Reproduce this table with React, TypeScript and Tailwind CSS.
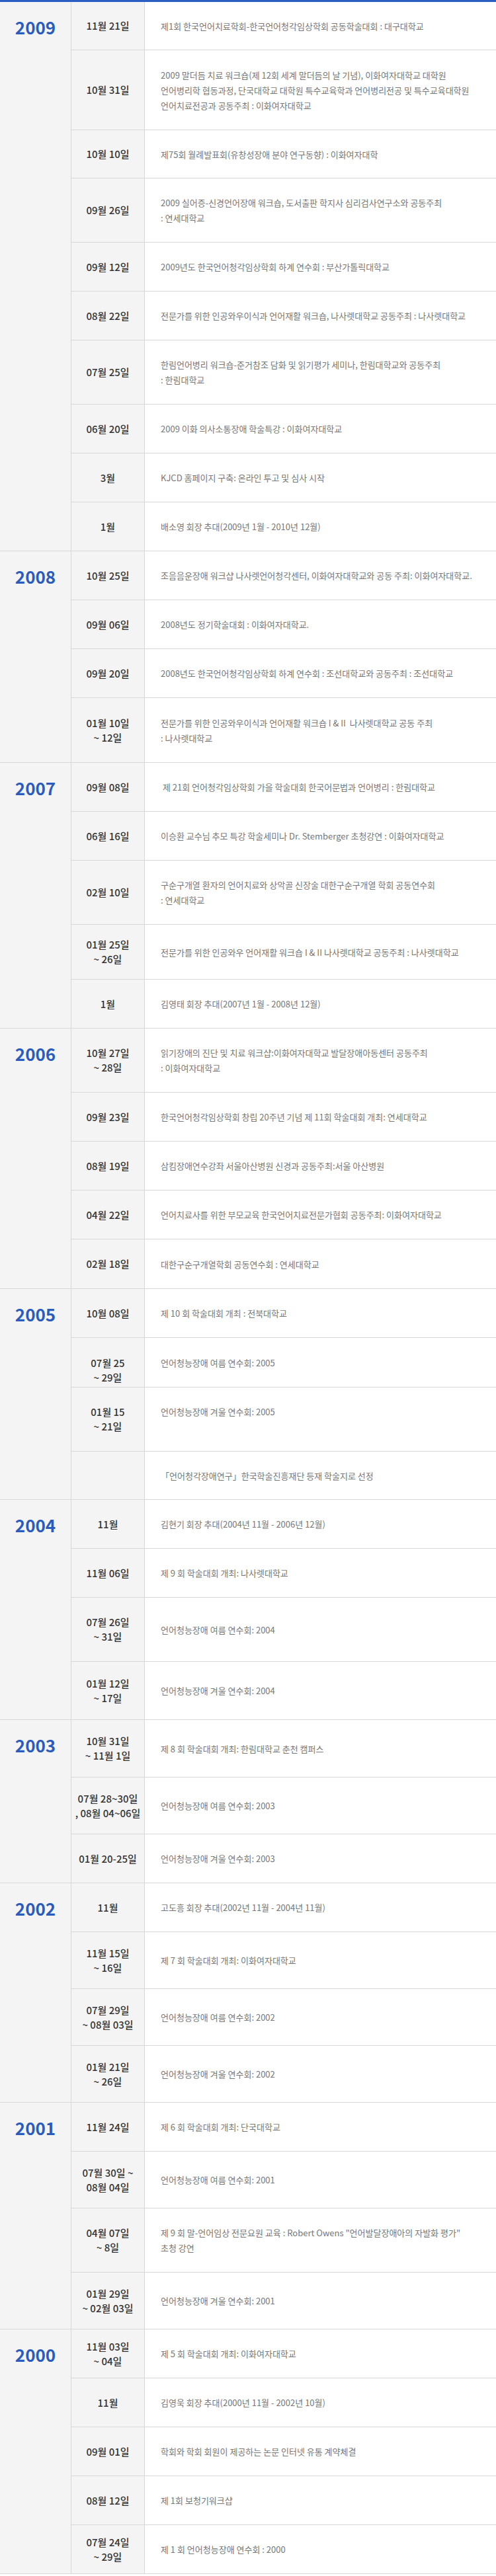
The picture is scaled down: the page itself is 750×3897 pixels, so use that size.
import React from "react";
import clsx from "clsx";

type Row = {
  date: string[];
  text: string[];
  h: string;
  dateCls?: string;
};

type Year = {
  year: string;
  rows: Row[];
};

const history: Year[] = [
  {
    year: "2009",
    rows: [
      { date: ["11월 21일"], text: ["제1회 한국언어치료학회-한국언어청각임상학회 공동학술대회 : 대구대학교"], h: "h-[73px]" },
      {
        date: ["10월 31일"],
        text: [
          "2009 말더듬 치료 워크숍(제 12회 세계 말더듬의 날 기념), 이화여자대학교 대학원",
          "언어병리학 협동과정, 단국대학교 대학원 특수교육학과 언어병리전공 및 특수교육대학원",
          "언어치료전공과 공동주최 : 이화여자대학교",
        ],
        h: "h-[121px]",
      },
      { date: ["10월 10일"], text: ["제75회 월례발표회(유창성장애 분야 연구동향) : 이화여자대학"], h: "h-[73px]" },
      {
        date: ["09월 26일"],
        text: ["2009 실어증-신경언어장애 워크숍, 도서출판 학지사 심리검사연구소와 공동주최", ": 연세대학교"],
        h: "h-[97px]",
      },
      { date: ["09월 12일"], text: ["2009년도 한국언어청각임상학회 하계 연수회 : 부산가톨릭대학교"], h: "h-[74px]" },
      { date: ["08월 22일"], text: ["전문가를 위한 인공와우이식과 언어재활 워크숍, 나사렛대학교 공동주최 : 나사렛대학교"], h: "h-[74px]" },
      {
        date: ["07월 25일"],
        text: ["한림언어병리 워크숍-준거참조 담화 및 읽기평가 세미나, 한림대학교와 공동주최", ": 한림대학교"],
        h: "h-[97px]",
      },
      { date: ["06월 20일"], text: ["2009 이화 의사소통장애 학술특강 : 이화여자대학교"], h: "h-[74px]" },
      { date: ["3월"], text: ["KJCD 홈페이지 구축: 온라인 투고 및 심사 시작"], h: "h-[74px]" },
      { date: ["1월"], text: ["배소영 회장 추대(2009년 1월 - 2010년 12월)"], h: "h-[74px]" },
    ],
  },
  {
    year: "2008",
    rows: [
      { date: ["10월 25일"], text: ["조음음운장애 워크샵 나사렛언어청각센터, 이화여자대학교와 공동 주최: 이화여자대학교."], h: "h-[74px]" },
      { date: ["09월 06일"], text: ["2008년도 정기학술대회 : 이화여자대학교."], h: "h-[74px]" },
      { date: ["09월 20일"], text: ["2008년도 한국언어청각임상학회 하계 연수회 : 조선대학교와 공동주최 : 조선대학교"], h: "h-[74px]" },
      {
        date: ["01월 10일", "~ 12일"],
        text: ["전문가를 위한 인공와우이식과 언어재활 워크숍 I & II  나사렛대학교 공동 주최", ": 나사렛대학교"],
        h: "h-[98px]",
      },
    ],
  },
  {
    year: "2007",
    rows: [
      { date: ["09월 08일"], text: ["\u00a0제 21회 언어청각임상학회 가을 학술대회 한국어문법과 언어병리 : 한림대학교"], h: "h-[74px]" },
      { date: ["06월 16일"], text: ["이승환 교수님 추모 특강 학술세미나 Dr. Stemberger 초청강연 : 이화여자대학교"], h: "h-[74px]" },
      {
        date: ["02월 10일"],
        text: ["구순구개열 환자의 언어치료와 상악골 신장술 대한구순구개열 학회 공동연수회", ": 연세대학교"],
        h: "h-[97px]",
      },
      {
        date: ["01월 25일", "~ 26일"],
        text: ["전문가를 위한 인공와우 언어재활 워크숍 I & II 나사렛대학교 공동주최 : 나사렛대학교"],
        h: "h-[83px]",
      },
      { date: ["1월"], text: ["김영태 회장 추대(2007년 1월 - 2008년 12월)"], h: "h-[74px]" },
    ],
  },
  {
    year: "2006",
    rows: [
      {
        date: ["10월 27일", "~ 28일"],
        text: ["읽기장애의 진단 및 치료 워크샵:이화여자대학교 발달장애아동센터 공동주최", ": 이화여자대학교"],
        h: "h-[97px]",
      },
      { date: ["09월 23일"], text: ["한국언어청각임상학회 창립 20주년 기념 제 11회 학술대회 개최: 연세대학교"], h: "h-[74px]" },
      { date: ["08월 19일"], text: ["삼킴장애연수강좌 서울아산병원 신경과 공동주최:서울 아산병원"], h: "h-[74px]" },
      { date: ["04월 22일"], text: ["언어치료사를 위한 부모교육 한국언어치료전문가협회 공동주최: 이화여자대학교"], h: "h-[74px]" },
      { date: ["02월 18일"], text: ["대한구순구개열학회 공동연수회 : 연세대학교"], h: "h-[75px]" },
    ],
  },
  {
    year: "2005",
    rows: [
      { date: ["10월 08일"], text: ["제 10 회 학술대회 개최 : 전북대학교"], h: "h-[74px]" },
      { date: ["07월 25", "~ 29일"], text: ["언어청능장애 여름 연수회: 2005"], h: "h-[75px]", dateCls: "pt-[24px]" },
      { date: ["01월 15", "~ 21일"], text: ["언어청능장애 겨울 연수회: 2005", "\u00a0"], h: "h-[97px]" },
      { date: [], text: ["「언어청각장애연구」한국학술진흥재단 등재 학술지로 선정"], h: "h-[73px]" },
    ],
  },
  {
    year: "2004",
    rows: [
      { date: ["11월"], text: ["김현기 회장 추대(2004년 11월 - 2006년 12월)"], h: "h-[74px]" },
      { date: ["11월 06일"], text: ["제 9 회 학술대회 개최: 나사렛대학교"], h: "h-[74px]" },
      { date: ["07월 26일", "~ 31일"], text: ["언어청능장애 여름 연수회: 2004"], h: "h-[97px]" },
      { date: ["01월 12일", "~ 17일"], text: ["언어청능장애 겨울 연수회: 2004"], h: "h-[88px]" },
    ],
  },
  {
    year: "2003",
    rows: [
      { date: ["10월 31일", "~ 11월 1일"], text: ["제 8 회 학술대회 개최: 한림대학교 춘천 캠퍼스"], h: "h-[87px]" },
      { date: ["07월 28~30일", ", 08월 04~06일"], text: ["언어청능장애 여름 연수회: 2003"], h: "h-[86px]" },
      { date: ["01월 20-25일"], text: ["언어청능장애 겨울 연수회: 2003"], h: "h-[74px]" },
    ],
  },
  {
    year: "2002",
    rows: [
      { date: ["11월"], text: ["고도흥 회장 추대(2002년 11월 - 2004년 11월)"], h: "h-[74px]" },
      { date: ["11월 15일", "~ 16일"], text: ["제 7 회 학술대회 개최: 이화여자대학교"], h: "h-[86px]" },
      { date: ["07월 29일", "~ 08월 03일"], text: ["언어청능장애 여름 연수회: 2002"], h: "h-[86px]" },
      { date: ["01월 21일", "~ 26일"], text: ["언어청능장애 겨울 연수회: 2002"], h: "h-[86px]" },
    ],
  },
  {
    year: "2001",
    rows: [
      { date: ["11월 24일"], text: ["제 6 회 학술대회 개최: 단국대학교"], h: "h-[74px]" },
      { date: ["07월 30일 ~", "08월 04일"], text: ["언어청능장애 여름 연수회: 2001"], h: "h-[86px]" },
      {
        date: ["04월 07일", "~ 8일"],
        text: ["제 9 회 말-언어임상 전문요원 교육 : Robert Owens \"언어발달장애아의 자발화 평가\"", "초청 강연"],
        h: "h-[97px]",
      },
      { date: ["01월 29일", "~ 02월 03일"], text: ["언어청능장애 겨울 연수회: 2001"], h: "h-[86px]" },
    ],
  },
  {
    year: "2000",
    rows: [
      { date: ["11월 03일", "~ 04일"], text: ["제 5 회 학술대회 개최: 이화여자대학교"], h: "h-[74px]" },
      { date: ["11월"], text: ["김영욱 회장 추대(2000년 11월 - 2002년 10월)"], h: "h-[74px]" },
      { date: ["09월 01일"], text: ["학회와 학회 회원이 제공하는 논문 인터넷 유통 계약체결"], h: "h-[74px]" },
      { date: ["08월 12일"], text: ["제 1회 보청기워크샵"], h: "h-[74px]" },
      { date: ["07월 24일", "~ 29일"], text: ["제 1 회 언어청능장애 연수회 : 2000"], h: "h-[74px]" },
    ],
  },
];

const HistoryRow: React.FC<{ row: Row }> = ({ row }) => {
  return (
    <div className={clsx("flex border-b border-[#d8d8d8]", row.h)}>
      <div
        className={clsx(
          "w-[111px] shrink-0 bg-[#f4f4f4] border-r border-[#d8d8d8] flex flex-col items-center justify-center text-center text-[15px] leading-[22px] font-medium text-[#333]",
          row.dateCls
        )}
      >
        {row.date.map((d) => (
          <span key={d} className="whitespace-nowrap">
            {d}
          </span>
        ))}
      </div>
      <div className="flex-1 min-w-0 flex flex-col justify-center pl-[24px] text-[13px] leading-[23px] text-[#777] overflow-hidden">
        {row.text.map((t, i) => (
          <span key={i} className="whitespace-pre">
            {t}
          </span>
        ))}
      </div>
    </div>
  );
};

const App: React.FC = () => {
  return (
    <div className="w-[750px] bg-white font-['Noto_Sans_CJK_KR','Noto_Sans',sans-serif]">
      <div className="h-[3px] bg-[#2b5ec4]" />

      {history.map((y) => (
        <div key={y.year} className="flex">
          {/* Year */}
          <div className="w-[108px] shrink-0 bg-[#f4f4f4] border-r border-b border-[#d8d8d8] pt-[23px] text-center">
            <span className="text-[26px] leading-[30px] font-bold text-[#2a5bbf]">{y.year}</span>
          </div>

          {/* Rows */}
          <div className="flex-1 min-w-0">
            {y.rows.map((r, i) => (
              <HistoryRow key={i} row={r} />
            ))}
          </div>
        </div>
      ))}
    </div>
  );
};

export default App;
